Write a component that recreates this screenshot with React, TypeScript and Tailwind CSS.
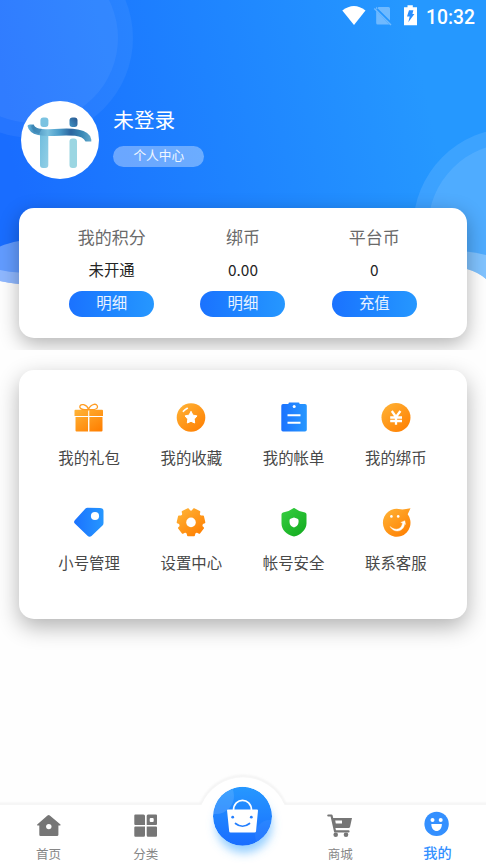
import React from "react";

const cjk = "font-['Roboto','Noto_Sans_CJK_SC',sans-serif]";

// Seven-toothed cog outline with one tooth pointing straight down.
const gearPath =
  Array.from({ length: 7 }, (_, i) => {
    const base = Math.PI / 2 + (i * Math.PI * 2) / 7;
    const at = (offset: number, radius: number) =>
      `${(16 + Math.cos(base + offset) * radius).toFixed(2)} ${(15.3 + Math.sin(base + offset) * radius).toFixed(2)}`;
    return `${i ? "L" : "M"}${at(-0.23, 13.5)}L${at(0.23, 13.5)}L${at(0.31, 11.6)}Q${at(0.449, 10.2)} ${at(0.588, 11.6)}`;
  }).join("") + "Z";

function Defs() {
  return (
    <svg className="absolute h-0 w-0" aria-hidden="true">
      <defs>
        <linearGradient id="orange" x1="0.1" y1="0" x2="0.9" y2="1">
          <stop offset="0" stopColor="#ffb235" />
          <stop offset="1" stopColor="#ff7e00" />
        </linearGradient>
        <linearGradient id="blue" x1="0" y1="0" x2="1" y2="0">
          <stop offset="0" stopColor="#1b72ff" />
          <stop offset="1" stopColor="#2697ff" />
        </linearGradient>
        <linearGradient id="green" x1="0.1" y1="0" x2="0.9" y2="1">
          <stop offset="0" stopColor="#36cd40" />
          <stop offset="1" stopColor="#12ab1f" />
        </linearGradient>
      </defs>
    </svg>
  );
}

function HeaderArt() {
  return (
    <svg className="absolute inset-0 h-full w-full" viewBox="0 0 486 350">
      <defs>
        <linearGradient id="sky" gradientUnits="userSpaceOnUse" x1="20" y1="200" x2="430" y2="110">
          <stop offset="0" stopColor="#196dff" />
          <stop offset="0.5" stopColor="#1e83ff" />
          <stop offset="1" stopColor="#2598ff" />
        </linearGradient>
        <clipPath id="skyClip">
          <path d="M0 0H486V279Q478 272 467 269L400 262H80L19 284Q9 283 0 281Z" />
        </clipPath>
      </defs>
      <g clipPath="url(#skyClip)">
        <rect width="486" height="350" fill="url(#sky)" />
        <circle cx="33" cy="38" r="100" fill="#fff" fillOpacity="0.055" />
        <circle cx="33" cy="38" r="85" fill="#fff" fillOpacity="0.055" />
        <circle cx="513" cy="228" r="100" fill="#fff" fillOpacity="0.11" />
        <circle cx="513" cy="228" r="85" fill="#fff" fillOpacity="0.1" />
        <path d="M0 246.500Q8 243 19 241L60 232V300H0Z" fill="#fff" fillOpacity="0.32" />
        <path d="M0 270Q9 272 19 272.500H60V300H0Z" fill="#fff" fillOpacity="0.29" />
        <path d="M440 250Q466 250 486 255V290H440Z" fill="#fff" fillOpacity="0.28" />
      </g>
    </svg>
  );
}

function StatusBar() {
  return (
    <div className="relative flex h-8 items-center justify-end pr-[11px] text-white">
      <svg className="mr-[-1px] h-8 w-[84px]" viewBox="0 0 84 32">
        <path d="M.3 10.600Q12 1.500 23.500 10.600L12 25Z" fill="#fff" />
        <g opacity="0.34">
          <path d="M34 9.500L36.500 7H46.500Q48 7 48 8.500V20.500L34 6.700Z" fill="#fff" />
          <path d="M34.200 11L47.300 24.500H35.700Q34.200 24.500 34.200 23Z" fill="#fff" />
          <path d="M32.300 8.500L49 25" stroke="#fff" strokeWidth="1.500" />
        </g>
        <path d="M62 7.200H65.500V5.300H70.800V7.200H75V25.200H62Z" fill="#fff" />
        <path d="M67 10.200H71.400L70.400 14H72.400L66.300 22.300L67.700 16.600H65Z" fill="#288eff" />
      </svg>
      <span className="mt-[3px] ml-[1px] font-['Roboto',sans-serif] text-[19.300px] leading-none font-medium">10:32</span>
    </div>
  );
}

function Avatar() {
  return (
    <div className="h-[78px] w-[78px] shrink-0 overflow-hidden rounded-full bg-white">
      <svg viewBox="0 0 78 78" className="h-full w-full">
        <defs>
          <linearGradient id="post" x1="0" y1="0" x2="1" y2="1">
            <stop offset="0" stopColor="#6fbdde" />
            <stop offset="1" stopColor="#94d0e6" />
          </linearGradient>
          <linearGradient id="ribbon" x1="0" y1="0" x2="1" y2="0">
            <stop offset="0" stopColor="#62b4dc" />
            <stop offset="0.100" stopColor="#438fbd" />
            <stop offset="0.320" stopColor="#79c0df" />
            <stop offset="0.500" stopColor="#4b9cc9" />
            <stop offset="0.680" stopColor="#2c659f" />
            <stop offset="0.850" stopColor="#3988b5" />
            <stop offset="1" stopColor="#63aacd" />
          </linearGradient>
          <linearGradient id="dot" x1="1" y1="0" x2="0" y2="1">
            <stop offset="0" stopColor="#27548e" />
            <stop offset="1" stopColor="#4295c5" />
          </linearGradient>
        </defs>
        <rect x="19" y="31" width="8.300" height="36" rx="3" fill="url(#post)" />
        <rect x="48.500" y="37.500" width="7.500" height="29.500" rx="3" fill="#9bd6e2" />
        <rect x="19.400" y="16.500" width="8" height="9.500" rx="3" fill="#7bc3e1" />
        <rect x="48.500" y="16.500" width="8" height="9.500" rx="3" fill="url(#dot)" />
        <path d="M6.500 25Q6.500 23.500 9 23.500H12.500Q14.500 27.800 21 28Q30 28.500 39 27.700Q50 27 57 28.500Q69.500 31 70.300 38.500V40.500H64.500Q62 35.500 54 34.700Q44 34 33 34.900Q24 35.500 17 34Q8 32 6.500 25Z" fill="url(#ribbon)" />
        <path d="M12.500 23.500Q14.500 28 21 27.800L18 33Q11 30 10 25Z" fill="#347aaa" opacity=".5" />
      </svg>
    </div>
  );
}

function Balance({ title, value, action }: { title: string; value: string; action: string }) {
  return (
    <div className="flex flex-1 flex-col items-center">
      <span className="mt-[18px] text-[17px] leading-[25px] text-[#6a6a6a]">{title}</span>
      <span className="mt-[7px] font-['Noto_Sans_CJK_SC',sans-serif] text-[15.400px] leading-[22px] text-[#242424]">{value}</span>
      <button className="mt-[11px] h-[26px] w-[85px] rounded-full bg-linear-to-r from-[#1b72ff] to-[#2697ff] text-[15.400px] leading-[25px] text-white/90">{action}</button>
    </div>
  );
}

const icons: Record<string, React.ReactNode> = {
  gift: (
    <>
      <path d="M1.500 8.700Q1.500 7.700 2.500 7.700H29Q30 7.700 30 8.700V14H1.500ZM2.500 15H15.200V29.500H3.500Q2.500 29.500 2.500 28.500ZM16.200 15H29.500V28.500Q29.500 29.500 28.500 29.500H16.200Z" fill="url(#orange)" />
      <path d="M15.700 8V29.500" stroke="#fff" strokeWidth="1.100" />
      <path d="M15.500 7.300Q7.500 8.500 6.800 5C7 .6 14 2.600 15.500 7.300C18 1.600 24.500 .6 24.500 5Q24 8.500 15.500 7.300Z" fill="none" stroke="#ff9c22" strokeWidth="1.300" />
    </>
  ),
  star: (
    <>
      <circle cx="16" cy="15.500" r="14.300" fill="url(#orange)" />
      <path d="M16 9.300L17.900 13.100L22 13.900L19.200 17.100L19.700 21L16 19.300L12.300 21L12.800 17.100L10 13.900L14.100 13.100Z" fill="#fff" stroke="#fff" strokeWidth="1" strokeLinejoin="round" />
      <path d="M8.400 9.300Q10 7.500 12.300 6.300" stroke="#fff" strokeWidth="1.700" strokeLinecap="round" fill="none" />
    </>
  ),
  bill: (
    <>
      <path d="M5 2H10.500V1.300Q10.500.5 11.500.5H20.500Q21.500.5 21.500 1.300V2H27Q28.800 2 28.800 3.800V27.700Q28.800 29.500 27 29.500H5Q3.300 29.500 3.300 27.700V3.800Q3.300 2 5 2Z" fill="url(#blue)" />
      <circle cx="16.200" cy="4.600" r="1.500" fill="#fff" />
      <path d="M9.500 13.300H22.500M9.500 20.700H22.500" stroke="#fff" strokeWidth="2" />
    </>
  ),
  coin: (
    <>
      <circle cx="16" cy="15.500" r="14.500" fill="url(#orange)" />
      <path d="M11.800 9L16 15L20.400 9M16 15V22.800M10.200 15.500H22M10.200 19H22" stroke="#fff" strokeWidth="2.300" fill="none" />
    </>
  ),
  tag: (
    <>
      <path d="M12.500 1.500Q13.300.800 14.500.800L27 1Q30.500 1 30.500 4V16Q30.500 17.500 29.500 18.500L18.500 29Q16.500 30.500 14.500 28.800L1.800 16.500Q.300 15 1.800 13.200Z" fill="url(#blue)" />
      <circle cx="22" cy="9" r="4.100" fill="#fff" />
    </>
  ),
  gear: (
    <>
      <path d={gearPath} fill="url(#orange)" stroke="url(#orange)" strokeWidth="1.700" strokeLinejoin="round" />
      <circle cx="16" cy="15.400" r="4.800" fill="#fff" />
    </>
  ),
  shield: (
    <>
      <path d="M14.500 1.700Q16 .500 17.500 1.700Q21 4.700 27 5.600Q28.500 5.900 28.500 7.500V16.500C28.500 23 22 28 17 29.300Q16 29.600 15 29.300C9 27.600 3.500 23 3.500 16.500V7.500Q3.500 6 5 5.600Q11 4.500 14.500 1.700Z" fill="url(#green)" />
      <path d="M16 10.500L19.500 11.700Q20.700 12.200 20.600 14C20.600 18 19 19.200 16 20.500C13 19.200 11.500 18 11.500 14Q11.300 12.200 12.500 11.700Z" fill="#fff" />
    </>
  ),
  support: (
    <>
      <path d="M20.500 2.300Q24 2.800 30.500 1.300L27.700 7.300A13.800 14 0 1 1 20.500 2.300Z" fill="url(#orange)" />
      <circle cx="11.400" cy="9.400" r="1.300" fill="#fff" />
      <circle cx="18.200" cy="9.400" r="1.300" fill="#fff" />
      <path d="M10 19.500C16 24.500 22 22 22.500 15.800L20.800 15.500L24.800 13.700L25.500 17.500L24.600 16.600C24 24.800 14.500 26.800 10 19.500Z" fill="#fff" stroke="#fff" strokeWidth=".4" />
    </>
  ),
};

function MenuItem({ icon, label }: { icon: string; label: string }) {
  return (
    <div className="flex h-[105px] flex-col items-center">
      <svg className="h-8 w-8" viewBox="0 0 32 32">{icons[icon]}</svg>
      <span className="mt-[14px] text-[15.400px] leading-[23px] text-[#484848]">{label}</span>
    </div>
  );
}

function NavItem({ label, active, children }: { label: string; active?: boolean; children: React.ReactNode }) {
  return (
    <div className="flex flex-1 flex-col items-center pt-[7px]">
      <svg className="h-7 w-7 shrink-0" viewBox="0 0 28 28">{children}</svg>
      <span className={active ? "mt-[5px] text-[14.200px] leading-[20px] font-medium text-[#3490ff]" : "mt-[7px] text-[12.500px] leading-[19px] text-[#868686]"}>{label}</span>
    </div>
  );
}

function BottomNav() {
  return (
    <nav className="relative mt-auto flex h-[61px] bg-white">
      <svg className="absolute bottom-0 left-0 h-[100px] w-[486px]" viewBox="0 0 486 100">
        <defs>
          <linearGradient id="shop" x1="0" y1="0" x2="0" y2="1">
            <stop offset="0" stopColor="#2698ff" />
            <stop offset="1" stopColor="#196dff" />
          </linearGradient>
          <filter id="line" x="-5%" y="-20%" width="110%" height="140%"><feGaussianBlur stdDeviation="0.8" /></filter>
          <filter id="glow" x="-40%" y="-40%" width="180%" height="180%"><feGaussianBlur stdDeviation="5" /></filter>
          <clipPath id="button"><circle cx="242.500" cy="52.200" r="29.500" /></clipPath>
        </defs>
        <path d="M-5 40H201A45.500 45.500 0 0 1 285 40H491" fill="none" stroke="#f0f0f0" strokeWidth="2" filter="url(#line)" />
        <path d="M0 41H201.500A45 45 0 0 1 284.500 41H486V100H0Z" fill="#fff" />
        <circle cx="244" cy="61" r="28" fill="#51b0ff" fillOpacity=".6" filter="url(#glow)" />
        <g clipPath="url(#button)">
          <circle cx="242.500" cy="52.200" r="29.500" fill="url(#shop)" />
          <circle cx="216" cy="32" r="18" fill="#fff" fillOpacity=".12" />
          <circle cx="270" cy="71" r="15" fill="#fff" fillOpacity=".05" />
        </g>
        <path d="M227 46Q227 45.500 228 45.500H257Q258 45.500 258 46.500L256 67.500Q255.800 68.500 254.500 68.500H230.500Q229.300 68.500 229.200 67.500Z" fill="#fff" />
        <path d="M233.500 46.500C233.500 33 251.500 33 251.500 46.500" fill="none" stroke="#fff" strokeWidth="1.700" />
        <circle cx="232.700" cy="53.200" r="1.400" fill="#237fff" />
        <circle cx="251.300" cy="53.200" r="1.400" fill="#237fff" />
        <path d="M235.500 59.500Q242.500 65 249.500 59.500" fill="none" stroke="#237fff" strokeWidth="1.700" strokeLinecap="round" />
      </svg>
      <div className="relative flex w-full">
        <NavItem label="首页">
          <path d="M12.500 5.400Q13.700 4.400 14.800 5.400L25.500 14.500Q26 15.500 25 15.500H23.400V24.800Q23.400 26.100 22 26.100H5.500Q4.300 26.100 4.300 24.800V15.500H2.700Q1.600 15.500 2.200 14.500Z" fill="#767676" />
          <circle cx="13.800" cy="16.600" r="2.700" fill="#fff" />
        </NavItem>
        <NavItem label="分类">
          <path d="M3.300 4.500H11.500Q13 4.500 13 6V15H3.300Q2.300 15 2.300 14V5.500Q2.300 4.500 3.300 4.500ZM14.700 6Q14.700 4.500 16 4.500H24Q25 4.500 25 5.500V14Q25 15 24 15H14.700ZM3.300 16.600H13V25.300Q13 26.800 11.700 26.800H3.300Q2.300 26.800 2.300 25.800V17.600Q2.300 16.600 3.300 16.600ZM14.700 16.600H24Q25 16.600 25 17.600V25.800Q25 26.800 24 26.800H16Q14.700 26.800 14.700 25.300Z" fill="#767676" />
          <rect x="17.700" y="8" width="4" height="4" rx="1" fill="#fff" />
        </NavItem>
        <div className="flex-1" />
        <NavItem label="商城">
          <path d="M2.300 5.500H5.500L9.100 21.400H22.500" fill="none" stroke="#767676" strokeWidth="2.200" strokeLinejoin="round" strokeLinecap="round" />
          <path d="M6.500 8H26L24 17Q23.700 18.100 22.700 18.100H8.700Z" fill="#767676" />
          <path d="M9.200 10.500H16V13.500H9.800Z" fill="#fff" />
          <circle cx="9.700" cy="24.700" r="2.300" fill="#767676" />
          <circle cx="20" cy="24.700" r="2.300" fill="#767676" />
        </NavItem>
        <NavItem label="我的" active>
          <circle cx="13.600" cy="13.900" r="12.200" fill="#3490ff" />
          <circle cx="9.500" cy="9.900" r="2" fill="#fff" />
          <circle cx="17.700" cy="9.900" r="2" fill="#fff" />
          <path d="M8.300 14H18.900C18.900 23.400 8.300 23.400 8.300 14Z" fill="#fff" />
        </NavItem>
      </div>
    </nav>
  );
}

const menu = [
  ["gift", "我的礼包"], ["star", "我的收藏"], ["bill", "我的帐单"], ["coin", "我的绑币"],
  ["tag", "小号管理"], ["gear", "设置中心"], ["shield", "帐号安全"], ["support", "联系客服"],
];

export default function App() {
  return (
    <main className={`relative flex h-[864px] w-[486px] flex-col overflow-hidden bg-[#fefefe] ${cjk}`}>
      <Defs />
      <section className="relative h-[350px] shrink-0 overflow-hidden">
        <HeaderArt />
        <StatusBar />
        <div className="relative mt-[69px] ml-[20.500px] flex h-[78px] gap-[14.800px]">
          <Avatar />
          <div className="flex flex-col items-start">
            <h1 className="mt-[5px] text-[20.600px] leading-[30px] text-white">未登录</h1>
            <span className="mt-[10px] h-[21px] w-[91px] rounded-full bg-white/35 text-center text-[12.700px] leading-[20px] text-white/90">个人中心</span>
          </div>
        </div>
        <div className="relative mx-[19px] mt-[29px] flex h-[129.500px] rounded-[15px] bg-white px-[27px] shadow-[0_6px_20px_rgba(0,0,0,0.3)]">
          <Balance title="我的积分" value="未开通" action="明细" />
          <Balance title="绑币" value="0.00" action="明细" />
          <Balance title="平台币" value="0" action="充值" />
        </div>
      </section>
      <section className="mx-[19px] mt-[20px] grid h-[249px] shrink-0 grid-cols-4 content-start rounded-[15px] bg-white pr-[20px] pl-[19px] pt-[32px] shadow-[0_8px_22px_rgba(0,0,0,0.3)]">
        {menu.map(([icon, label]) => <MenuItem key={icon} icon={icon} label={label} />)}
      </section>
      <BottomNav />
    </main>
  );
}
